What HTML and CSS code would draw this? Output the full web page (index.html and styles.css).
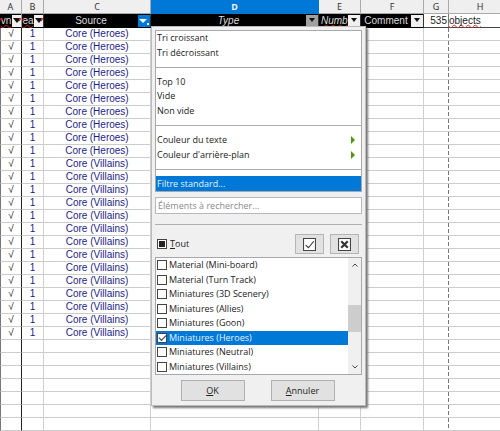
FILE: index.html
```html
<!DOCTYPE html>
<html lang="fr">
<head>
<meta charset="utf-8">
<title>Filtre automatique</title>
<link rel="stylesheet" href="styles.css">
</head>
<body>
<main class="sheet">
<table class="grid">
<colgroup><col class="col-a"><col class="col-b"><col class="col-c"><col class="col-d"><col class="col-e"><col class="col-f"><col class="col-g"><col class="col-h"></colgroup>
<thead>
<tr class="letters"><th>A</th><th>B</th><th>C</th><th class="current">D</th><th>E</th><th>F</th><th>G</th><th>H</th></tr>
<tr class="titles">
<th><div class="title clipped"><span class="typo">vn</span><button class="drop narrow" aria-label="Filtrer A"><svg viewBox="0 0 8 5"><path d="M0 0h8L4 5z"/></svg></button><svg class="more before" viewBox="0 0 3 6"><path d="M3 0v6L0 3z"/></svg><svg class="more after" viewBox="0 0 3 6"><path d="M0 0v6l3-3z"/></svg></div></th>
<th><div class="title clipped"><span class="typo">ea</span><button class="drop narrow" aria-label="Filtrer B"><svg viewBox="0 0 8 5"><path d="M0 0h8L4 5z"/></svg></button><svg class="more before" viewBox="0 0 3 6"><path d="M3 0v6L0 3z"/></svg><svg class="more after" viewBox="0 0 3 6"><path d="M0 0v6l3-3z"/></svg></div></th>
<th><div class="title"><span>Source</span><button class="drop active" aria-label="Filtrer C"><svg viewBox="0 0 12 12"><path d="M1 4h8L5 8z"/><path d="M9 8h2v2H9z"/></svg></button></div></th>
<th><div class="title slanted"><span>Type</span><button class="drop pressed" aria-label="Filtrer D"><svg viewBox="0 0 8 5"><path d="M1 0h6L4 4z"/></svg></button></div></th>
<th><div class="title slanted"><span class="typo">Numb</span><button class="drop" aria-label="Filtrer E"><svg viewBox="0 0 8 5"><path d="M1 0h6L4 4z"/></svg></button></div></th>
<th><div class="title"><span>Comment</span><button class="drop" aria-label="Filtrer F"><svg viewBox="0 0 8 5"><path d="M1 0h6L4 4z"/></svg></button></div></th>
<td class="count">535</td><td class="unit"><span class="typo">objects</span></td>
</tr>
</thead>
<tbody>
<tr><td>√<td>1<td>Core (Heroes)<td><td><td><td><td>
<tr><td>√<td>1<td>Core (Heroes)<td><td><td><td><td>
<tr><td>√<td>1<td>Core (Heroes)<td><td><td><td><td>
<tr><td>√<td>1<td>Core (Heroes)<td><td><td><td><td>
<tr><td>√<td>1<td>Core (Heroes)<td><td><td><td><td>
<tr><td>√<td>1<td>Core (Heroes)<td><td><td><td><td>
<tr><td>√<td>1<td>Core (Heroes)<td><td><td><td><td>
<tr><td>√<td>1<td>Core (Heroes)<td><td><td><td><td>
<tr><td>√<td>1<td>Core (Heroes)<td><td><td><td><td>
<tr><td>√<td>1<td>Core (Heroes)<td><td><td><td><td>
<tr><td>√<td>1<td>Core (Villains)<td><td><td><td><td>
<tr><td>√<td>1<td>Core (Villains)<td><td><td><td><td>
<tr><td>√<td>1<td>Core (Villains)<td><td><td><td><td>
<tr><td>√<td>1<td>Core (Villains)<td><td><td><td><td>
<tr><td>√<td>1<td>Core (Villains)<td><td><td><td><td>
<tr><td>√<td>1<td>Core (Villains)<td><td><td><td><td>
<tr><td>√<td>1<td>Core (Villains)<td><td><td><td><td>
<tr><td>√<td>1<td>Core (Villains)<td><td><td><td><td>
<tr><td>√<td>1<td>Core (Villains)<td><td><td><td><td>
<tr><td>√<td>1<td>Core (Villains)<td><td><td><td><td>
<tr><td>√<td>1<td>Core (Villains)<td><td><td><td><td>
<tr><td>√<td>1<td>Core (Villains)<td><td><td><td><td>
<tr><td>√<td>1<td>Core (Villains)<td><td><td><td><td>
<tr><td>√<td>1<td>Core (Villains)<td><td><td><td><td>
<tr><td><td><td><td><td><td><td><td>
<tr><td><td><td><td><td><td><td><td>
<tr><td><td><td><td><td><td><td><td>
<tr><td><td><td><td><td><td><td><td>
<tr><td><td><td><td><td><td><td><td>
<tr><td><td><td><td><td><td><td><td>
<tr><td><td><td><td><td><td><td><td>
<tr><td><td><td><td><td><td><td><td>
</tbody>
</table>

<form class="popup">
<div class="menu">
<button type="button">Tri croissant</button>
<button type="button">Tri décroissant</button>
<hr>
<button type="button">Top 10</button>
<button type="button">Vide</button>
<button type="button">Non vide</button>
<hr>
<button type="button">Couleur du texte<svg viewBox="0 0 4 8"><path d="M0 0l4 4-4 4z"/></svg></button>
<button type="button">Couleur d'arrière-plan<svg viewBox="0 0 4 8"><path d="M0 0l4 4-4 4z"/></svg></button>
<hr>
<button type="button" class="selected">Filtre standard...</button>
</div>
<input class="search" type="text" placeholder="Éléments à rechercher..." aria-label="Éléments à rechercher">
<hr class="divider">
<div class="tools">
<label class="all"><input type="checkbox" class="mixed"><span><u>T</u>out</span></label>
<button type="button" class="tool" aria-label="Afficher seulement l'élément actif"><svg viewBox="0 0 12 12"><path class="box" d="M.5.5h11v11H.5z"/><path d="M2.500 6.500L5 9l5-6"/></svg></button>
<button type="button" class="tool" aria-label="Masquer seulement l'élément actif"><svg viewBox="0 0 12 12"><path class="box" d="M.5.5h11v11H.5z"/><path class="cross" d="M3 3l6 6M9 3L3 9"/></svg></button>
</div>
<div class="list">
<div class="choices">
<label><input type="checkbox">Material (Mini-board)</label>
<label><input type="checkbox">Material (Turn Track)</label>
<label><input type="checkbox">Miniatures (3D Scenery)</label>
<label><input type="checkbox">Miniatures (Allies)</label>
<label><input type="checkbox">Miniatures (Goon)</label>
<label class="selected"><input type="checkbox" checked>Miniatures (Heroes)</label>
<label><input type="checkbox">Miniatures (Neutral)</label>
<label><input type="checkbox">Miniatures (Villains)</label>
</div>
<div class="scrollbar">
<svg viewBox="0 0 6 4"><path d="M.5 3.500L3 1l2.500 2.500"/></svg>
<div class="thumb"></div>
<svg viewBox="0 0 6 4"><path d="M.5.5L3 3 5.500.5"/></svg>
</div>
</div>
<div class="actions">
<button type="button"><span><u>O</u>K</span></button>
<button type="button"><span><u>A</u>nnuler</span></button>
</div>
</form>
</main>
</body>
</html>
```
FILE: styles.css
```css
* { box-sizing: border-box; }
body {
  margin: 0;
  background: #fff;
  overflow: hidden;
}
.sheet {
  position: relative;
  height: 100vh;
  overflow: hidden;
}

/* Spreadsheet */
.grid {
  width: 100%;
  min-width: 512px;
  table-layout: fixed;
  border-collapse: separate;
  border-spacing: 0;
  font: 10px/12px "Liberation Sans", Arial, sans-serif;
}
.col-a { width: 22px; }
.col-b { width: 22px; }
.col-c { width: 107px; }
.col-d { width: 168px; }
.col-e { width: 42px; }
.col-f { width: 63px; }
.col-g { width: 25px; }
.grid th, .grid td {
  height: 13px;
  padding: 0;
  text-align: center;
  white-space: nowrap;
  border-right: 1px solid #d0d0d0;
  border-bottom: 1px solid #ccc;
}
.grid td:first-child {
  border-left: 1px solid #777;
  border-right-color: #222;
  color: #222;
}
.grid td:nth-child(2), .grid td:nth-child(3) { color: #1c1c8c; }
.grid tbody td:nth-child(7) {
  border-right: 0;
  background: linear-gradient(#777 60%, #fff 60%) right top / 1px 50% repeat-y;
}

.grid .letters th {
  height: 14px;
  background: #efefef;
  border-right-color: #aaa;
  border-bottom-color: #aaa;
  color: #333;
  font: 9px/12px "Noto Sans", sans-serif;
}
.grid .letters .current {
  background: #0078d7;
  border-color: #0078d7;
  color: #e8f2fb;
  font-weight: bold;
}

.grid .titles th, .grid .titles td { height: 14px; }
.grid .titles th {
  background: #000;
  border-right-color: #333;
  border-bottom-color: #000;
  color: #ddd;
  font-weight: normal;
}
.grid .titles th:first-child { border-right-color: #999; }
.grid .titles td { border-bottom-color: #444; color: #222; }
.grid .titles .count { padding-right: 1px; border-right-color: #777; text-align: right; }
.grid .titles .unit { text-align: left; }
.title {
  position: relative;
  display: flex;
  align-items: center;
  height: 13px;
}
.title span { flex: 1; }
.slanted { font-style: italic; }
.typo {
  text-decoration: underline wavy #d22 1px;
  text-decoration-skip-ink: none;
  text-underline-offset: 0;
}
.slanted .typo { padding-left: 2px; text-align: left; }
.more {
  position: absolute;
  top: 3px;
  width: 2px;
  height: 5px;
  fill: #d22;
}
.before { left: 0; }
.after { right: 0; }
.drop {
  display: flex;
  align-items: center;
  justify-content: center;
  flex: none;
  width: 12px;
  height: 12px;
  padding: 0;
  border: 0;
  background: #f0f0f0;
}
.drop svg { width: 8px; height: 5px; fill: #111; }
.drop.narrow { width: 9px; }
.drop.pressed { background: #a0a0a0; }
.drop.active { background: #0078d7; }
.drop.active svg { width: 12px; height: 12px; fill: #fff; }

/* Filter popup */
.popup {
  position: absolute;
  left: 151px;
  top: 26px;
  width: 215px;
  display: flex;
  flex-direction: column;
  padding: 3px;
  background: #f0f0f0;
  border: 1px solid #bbb;
  box-shadow: 2px 2px 2px #777;
  color: #222;
  font: 9px/14px "Open Sans", sans-serif;
}
.popup button, .popup input { font: inherit; color: inherit; }
.popup hr { margin: 0; border: 0; }
.popup .selected { background: #0078d7; color: #e8f2fb; }
.menu {
  display: grid;
  grid-template-rows: repeat(11, 1fr);
  height: 162px;
  border: 1px solid #a5a8ae;
  background: #fff;
}
.menu button {
  display: flex;
  align-items: center;
  justify-content: space-between;
  padding: 0 6px 0 1px;
  border: 0;
  background: none;
  text-align: left;
}
.menu svg { width: 4px; height: 8px; fill: #4e9a06; }
.popup .menu hr { align-self: center; height: 1px; background: #aaa; }
.search {
  height: 17px;
  margin-top: 5px;
  padding: 0 2px;
  border: 1px solid #b5b8be;
  background: #fff;
}
.search::placeholder { color: #8a8a8a; opacity: 1; }
.popup .divider { height: 1px; margin-top: 10px; background: #b0b0b0; }
.tools {
  display: flex;
  align-items: center;
  gap: 6px;
  margin: 9px 3px 3px 2px;
}
.all { display: flex; align-items: center; gap: 3px; margin-right: auto; }
.tool {
  display: flex;
  align-items: center;
  justify-content: center;
  width: 29px;
  height: 20px;
  padding: 0;
  border: 1px solid #b5b5b5;
  background: #e1e1e1;
}
.tool svg { width: 13px; height: 13px; fill: none; stroke: #333; stroke-width: 1; }
.tool .box { fill: #fff; stroke: #444; }
.tool .cross { stroke-width: 2; }
.popup input[type="checkbox"] {
  appearance: none;
  position: relative;
  flex: none;
  width: 10px;
  height: 10px;
  margin: 0;
  border: 1px solid #444;
  background: #fff;
}
.mixed::after {
  content: "";
  position: absolute;
  inset: 1px;
  background: #222;
}
.list {
  display: flex;
  height: 118px;
  border: 1px solid #a5a8ae;
  background: #fff;
}
.choices {
  flex: 1;
  display: grid;
  grid-template-rows: repeat(8, 1fr);
}
.choices label { display: flex; align-items: center; gap: 2px; padding-left: 1px; }
.choices input:checked::after {
  content: "";
  position: absolute;
  left: 1px;
  top: 1px;
  width: 6px;
  height: 3px;
  border: solid #333;
  border-width: 0 0 1px 1px;
  transform: rotate(-45deg);
}
.scrollbar {
  display: flex;
  flex-direction: column;
  align-items: center;
  width: 13px;
  padding: 5px 0;
  background: #f0f0f0;
}
.scrollbar svg { width: 6px; height: 4px; fill: none; stroke: #444; stroke-width: 1; }
.thumb { width: 100%; height: 27px; margin: 38px 0 auto; background: #cdcdcd; }
.actions {
  display: flex;
  justify-content: center;
  gap: 26px;
  padding: 5px 2px 1px 0;
}
.actions button {
  width: 64px;
  height: 21px;
  padding: 0;
  border: 1px solid #b0b0b0;
  background: #e1e1e1;
}
```
